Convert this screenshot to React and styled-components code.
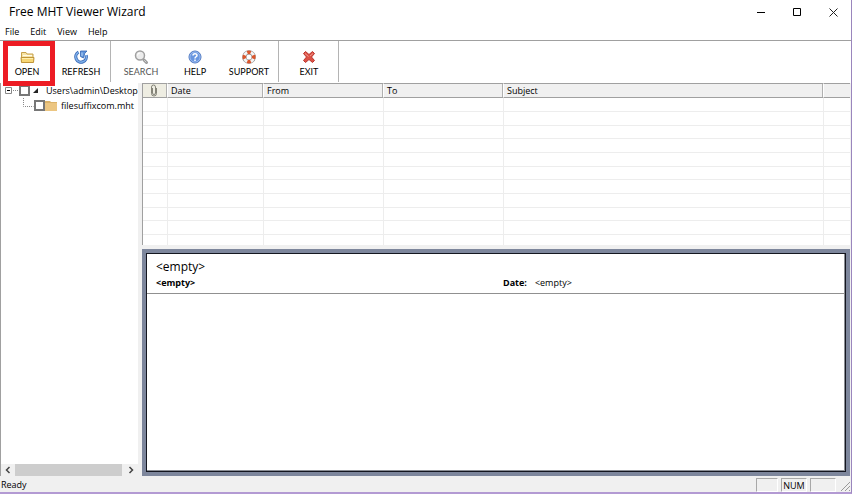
import styled, { createGlobalStyle } from "styled-components";

const GlobalStyle = createGlobalStyle`
  * {
    box-sizing: border-box;
  }

  body {
    margin: 0;
    background: #f0f0f0;
    color: #000;
    font-family: "Open Sans", "Noto Sans", sans-serif;
    font-size: 9px;
    line-height: 14px;
  }

  button {
    padding: 0;
    border: none;
    background: none;
    color: inherit;
    font: inherit;
  }
`;

const Window = styled.div`
  display: flex;
  flex-direction: column;
  height: 100vh;
  overflow: hidden;
  border-right: 1px solid #9a86bd;
  border-bottom: 2px solid #b39ad3;
`;

const TitleBar = styled.header`
  display: flex;
  flex: none;
  align-items: center;
  justify-content: space-between;
  height: 24px;
  padding-left: 9px;
  background: #fff;
`;

const Title = styled.h1`
  margin: 0;
  font-size: 12px;
  font-weight: 400;
  line-height: 16px;
`;

const WindowButtons = styled.div`
  display: flex;
`;

const WindowButton = styled.button`
  display: flex;
  align-items: center;
  justify-content: center;
  width: 36px;
  height: 24px;
`;

const MenuBar = styled.nav`
  display: flex;
  flex: none;
  gap: 11px;
  height: 16px;
  padding-left: 5px;
  background: #fff;
`;

const MenuItem = styled.button`
  height: 16px;
`;

const ToolBar = styled.div`
  display: flex;
  flex: none;
  height: 43px;
  border-top: 1px solid #a0a0a0;
  background: #fff;
`;

const ToolGroup = styled.div`
  display: flex;
  height: 41px;
  padding: 0 2px 0 ${(props) => (props.$first ? "0" : "3px")};
  border-right: 1px solid #b4b4b4;
`;

const ToolButton = styled.button`
  position: relative;
  display: flex;
  flex-direction: column;
  align-items: center;
  gap: 2px;
  width: 54px;
  padding-top: 8px;
  color: ${(props) => (props.$muted ? "#555" : "#000")};
  font-family: Lato, sans-serif;
  font-size: 9px;
  line-height: 10px;

  svg {
    flex: none;
  }
`;

const Highlight = styled.span`
  position: absolute;
  top: 0;
  left: 3px;
  z-index: 2;
  width: 52px;
  height: 45px;
  border: 5px solid #ed1c24;
  pointer-events: none;
`;

const Body = styled.main`
  display: flex;
  flex: 1;
  gap: 4px;
  min-height: 0;
  padding-right: 1px;
`;

const TreePane = styled.aside`
  display: flex;
  flex: none;
  flex-direction: column;
  justify-content: space-between;
  width: 138px;
  border-left: 1px solid #a0a0a0;
  background: #fff;
`;

const Tree = styled.ul`
  margin: 0;
  padding: 0;
  list-style: none;
`;

const TreeRow = styled.li`
  display: flex;
  align-items: center;
  height: 15px;
  padding-left: ${(props) => props.$indent}px;
  white-space: nowrap;

  svg {
    flex: none;
  }

  label {
    display: flex;
    align-items: center;
  }
`;

const CheckBox = styled.input`
  flex: none;
  appearance: none;
  width: 11px;
  height: 11px;
  margin: 0;
  border: 2px solid #777;
  background: #fff;
`;

const ScrollBar = styled.div`
  display: flex;
  height: 12px;
  background: #f0f0f0;
`;

const ScrollArrow = styled.button`
  display: flex;
  align-items: center;
  justify-content: center;
  width: 14px;
`;

const ScrollThumb = styled.div`
  flex: 1;
  margin-right: 2px;
  background: #cdcdcd;
`;

const Content = styled.section`
  display: flex;
  flex: 1;
  flex-direction: column;
  gap: 4px;
  min-width: 0;
`;

const ListPane = styled.div`
  flex: none;
  height: 162px;
  overflow: hidden;
  border-left: 1px solid #a0a0a0;
  background: #fff;
`;

const MailTable = styled.table`
  width: 100%;
  table-layout: fixed;
  border-collapse: separate;
  border-spacing: 0;

  th {
    height: 15px;
    padding: 0 3px;
    border-top: 1px solid #a0a0a0;
    border-right: 1px solid #fff;
    border-bottom: 1px solid #a0a0a0;
    background: #f0f0f0;
    box-shadow: inset -1px 0 #b0b0b0;
    font-weight: 400;
    line-height: 13px;
    text-align: left;
  }

  th:first-child {
    padding: 0 0 0 7px;
    background: #eeede2;
  }

  th:last-child {
    border-right: none;
    box-shadow: none;
  }

  th svg {
    display: block;
  }

  td {
    height: 14px;
    padding: 0;
    border-right: 1px solid #ededed;
    border-bottom: 1px solid #ededed;
  }

  tr:nth-child(3n) td {
    height: 13px;
  }

  td:last-child {
    border-right: none;
  }
`;

const Preview = styled.article`
  flex: 1;
  min-height: 0;
  border: 4px solid #7d869c;
`;

const PreviewPage = styled.div`
  height: 100%;
  border: 1px solid #14161f;
  background: #fff;
  box-shadow: inset -1px -1px #8a8d94;
`;

const PreviewHeader = styled.header`
  height: 40px;
  padding: 4px 9px 0;
  border-bottom: 1px solid #909090;
`;

const PreviewSubject = styled.h2`
  margin: 0;
  font-size: 12px;
  font-weight: 400;
  line-height: 18px;
`;

const PreviewMeta = styled.div`
  display: flex;

  strong {
    font-weight: 700;
  }
`;

const PreviewFrom = styled.strong`
  flex: 0 0 347px;
`;

const PreviewDate = styled.span`
  display: flex;
  gap: 8px;
`;

const StatusBar = styled.footer`
  display: flex;
  flex: none;
  align-items: flex-end;
  gap: 3px;
  height: 16px;
  padding-left: 1px;
`;

const StatusText = styled.span`
  flex: 1;
`;

const StatusCell = styled.span`
  width: ${(props) => props.$width}px;
  height: 14px;
  border: 1px solid #a8a8a8;
  border-right-color: #fff;
  border-bottom-color: #fff;
  line-height: 13px;
  text-align: center;
`;

const OpenIcon = () => (
  <svg width="16" height="16" viewBox="0 0 16 16">
    <path d="M2.500 13V3.500h4.500l1 1.500h6v8z" fill="#f6e3a4" stroke="#c6a04a" />
    <path d="M4 6.500h9" stroke="#fffbe8" />
    <path d="M2.500 13.500 2 8.500h13l-.500 5z" fill="#f7d675" stroke="#c0953a" />
    <path d="M3 9.500h11" stroke="#fff0ae" />
  </svg>
);

const RefreshIcon = () => (
  <svg width="16" height="16" viewBox="0 0 16 16" fill="none">
    <path d="M5.500 3.200a5.300 5.300 0 1 0 7.600 3" stroke="#3566b4" strokeWidth="3.200" />
    <path d="M5.500 3.200a5.300 5.300 0 1 0 7.600 3" stroke="#7fb0ea" strokeWidth="1.600" />
    <path d="M7.500 2h6.500L11.800 4.200 10.500 9 7.500 7.500z" fill="#5f95dc" stroke="#3566b4" strokeWidth="0.800" />
    <path d="M9 3.500V7" stroke="#b8d4f5" />
  </svg>
);

const SearchIcon = () => (
  <svg width="16" height="16" viewBox="0 0 16 16">
    <path d="m11 11 2.500 2.500" stroke="#9a9a9a" strokeWidth="3" strokeLinecap="round" />
    <path d="m11.500 11.500 1.500 1.500" stroke="#d4d4d4" strokeLinecap="round" />
    <circle cx="7" cy="6.500" r="4.500" fill="#ececec" stroke="#a0a0a0" strokeWidth="1.500" />
    <path d="M4.500 6.500A2.500 2.500 0 0 1 7 4" fill="none" stroke="#fff" />
  </svg>
);

const HelpIcon = () => (
  <svg width="16" height="16" viewBox="0 0 16 16">
    <circle cx="8" cy="8" r="6" fill="#6896e0" stroke="#4a74bd" />
    <circle cx="8" cy="8" r="5.100" fill="none" stroke="#a9c5f2" strokeWidth="0.800" />
    <path
      d="M6 6.500C6 4.200 10 4.200 10 6.400c0 1.300-2 1.400-2 3M8 10.500v1.500"
      fill="none"
      stroke="#fff"
      strokeWidth="1.500"
    />
  </svg>
);

const SupportIcon = () => (
  <svg width="16" height="16" viewBox="0 0 16 16" fill="none">
    <circle cx="8" cy="8" r="4.700" stroke="#8d8d8d" strokeWidth="4.200" />
    <circle cx="8" cy="8" r="4.700" stroke="#f4f4f4" strokeWidth="3" />
    <circle
      cx="8"
      cy="8"
      r="4.700"
      stroke="#d9562c"
      strokeWidth="3.600"
      pathLength="8"
      strokeDasharray="1 1"
      strokeDashoffset="0.500"
    />
  </svg>
);

const ExitIcon = () => (
  <svg width="16" height="16" viewBox="0 0 16 16">
    <path
      d="m2.500 4.500 2-2L8 5.500l3.500-3 2 2L10.500 8l3 3.500-2 2L8 10.500l-3.500 3-2-2 3-3.500z"
      fill="#dd5145"
      stroke="#b8352e"
      strokeLinejoin="round"
    />
    <path d="m4 4.500 3.500 3M12 4.500 9 7" stroke="#f39a8d" />
  </svg>
);

const ClipIcon = () => (
  <svg width="8" height="13" viewBox="0 0 8 13" fill="none">
    <path
      d="M2.500 4v5a1.500 1.500 0 0 0 3 0V3a2 2 0 0 0-4 0v6.500a2.500 2.500 0 0 0 5 0V4"
      stroke="#77776c"
      strokeWidth="0.900"
    />
  </svg>
);

const toolGroups = [
  [
    { label: "OPEN", icon: <OpenIcon />, highlighted: true },
    { label: "REFRESH", icon: <RefreshIcon /> },
  ],
  [
    { label: "SEARCH", icon: <SearchIcon />, muted: true },
    { label: "HELP", icon: <HelpIcon /> },
    { label: "SUPPORT", icon: <SupportIcon /> },
  ],
  [{ label: "EXIT", icon: <ExitIcon /> }],
];

const columns = [
  { label: "", width: 25 },
  { label: "Date", width: 96 },
  { label: "From", width: 120 },
  { label: "To", width: 120 },
  { label: "Subject", width: 320 },
  { label: "" },
];

const rows = Array.from({ length: 11 }, (_, i) => i);

function App() {
  return (
    <>
      <GlobalStyle />
      <Window>
        <TitleBar>
          <Title>Free MHT Viewer Wizard</Title>
          <WindowButtons>
            <WindowButton aria-label="Minimize">
              <svg width="9" height="9" viewBox="0 0 9 9">
                <path d="M0 4.500h8" stroke="#000" />
              </svg>
            </WindowButton>
            <WindowButton aria-label="Maximize">
              <svg width="9" height="9" viewBox="0 0 9 9">
                <path d="M.5.500h7v7h-7z" fill="none" stroke="#000" />
              </svg>
            </WindowButton>
            <WindowButton aria-label="Close">
              <svg width="9" height="9" viewBox="0 0 9 9">
                <path d="m.5.500 8 8m0-8-8 8" stroke="#222" />
              </svg>
            </WindowButton>
          </WindowButtons>
        </TitleBar>

        <MenuBar>
          {["File", "Edit", "View", "Help"].map((item) => (
            <MenuItem key={item}>{item}</MenuItem>
          ))}
        </MenuBar>

        <ToolBar>
          {toolGroups.map((group, i) => (
            <ToolGroup key={i} $first={i === 0}>
              {group.map((tool) => (
                <ToolButton key={tool.label} $muted={tool.muted}>
                  {tool.icon}
                  {tool.label}
                  {tool.highlighted && <Highlight />}
                </ToolButton>
              ))}
            </ToolGroup>
          ))}
        </ToolBar>

        <Body>
          <TreePane>
            <Tree>
              <TreeRow $indent={4}>
                <svg width="14" height="15" viewBox="0 0 14 15" fill="none">
                  <path d="M.5 4.500h6v6h-6z" stroke="#888" />
                  <path d="M2 7.500h3" stroke="#000" />
                  <path d="M8 7.500h5" stroke="#888" strokeDasharray="1 1" />
                </svg>
                <label>
                  <CheckBox type="checkbox" />
                  <svg width="16" height="15" viewBox="0 0 16 15">
                    <path d="M8 5v5H3z" fill="#222" />
                  </svg>
                  Users\admin\Desktop
                </label>
              </TreeRow>
              <TreeRow $indent={22}>
                <svg width="11" height="15" viewBox="0 0 11 15" fill="none">
                  <path d="M.5 0v8.500h10" stroke="#888" strokeDasharray="1 1" />
                </svg>
                <label>
                  <CheckBox type="checkbox" />
                  <svg width="16" height="15" viewBox="0 0 16 15">
                    <path d="M0 3h5l1 1h6v9H0z" fill="#dcb36a" />
                    <path d="M0 5h12v8H0z" fill="#ecc682" />
                  </svg>
                  filesuffixcom.mht
                </label>
              </TreeRow>
            </Tree>
            <ScrollBar>
              <ScrollArrow aria-label="Scroll left">
                <svg width="6" height="8" viewBox="0 0 6 8" fill="none">
                  <path d="M4.500 1 1.500 4l3 3" stroke="#444" strokeWidth="1.500" />
                </svg>
              </ScrollArrow>
              <ScrollThumb />
              <ScrollArrow aria-label="Scroll right">
                <svg width="6" height="8" viewBox="0 0 6 8" fill="none">
                  <path d="m1.500 1 3 3-3 3" stroke="#444" strokeWidth="1.500" />
                </svg>
              </ScrollArrow>
            </ScrollBar>
          </TreePane>

          <Content>
            <ListPane>
              <MailTable>
                <colgroup>
                  {columns.map((column, i) => (
                    <col key={i} width={column.width} />
                  ))}
                </colgroup>
                <thead>
                  <tr>
                    {columns.map((column, i) => (
                      <th key={i}>{i === 0 ? <ClipIcon /> : column.label}</th>
                    ))}
                  </tr>
                </thead>
                <tbody>
                  {rows.map((row) => (
                    <tr key={row}>
                      {columns.map((column, i) => (
                        <td key={i} />
                      ))}
                    </tr>
                  ))}
                </tbody>
              </MailTable>
            </ListPane>

            <Preview>
              <PreviewPage>
                <PreviewHeader>
                  <PreviewSubject>&lt;empty&gt;</PreviewSubject>
                  <PreviewMeta>
                    <PreviewFrom>&lt;empty&gt;</PreviewFrom>
                    <PreviewDate>
                      <strong>Date:</strong>
                      <span>&lt;empty&gt;</span>
                    </PreviewDate>
                  </PreviewMeta>
                </PreviewHeader>
              </PreviewPage>
            </Preview>
          </Content>
        </Body>

        <StatusBar>
          <StatusText>Ready</StatusText>
          <StatusCell $width={22} />
          <StatusCell $width={26}>NUM</StatusCell>
          <StatusCell $width={26} />
          <svg width="12" height="14" viewBox="0 0 12 14">
            <path d="m2 13 9-9M6 13l5-5M10 13l1-1" stroke="#999" />
          </svg>
        </StatusBar>
      </Window>
    </>
  );
}

export default App;
